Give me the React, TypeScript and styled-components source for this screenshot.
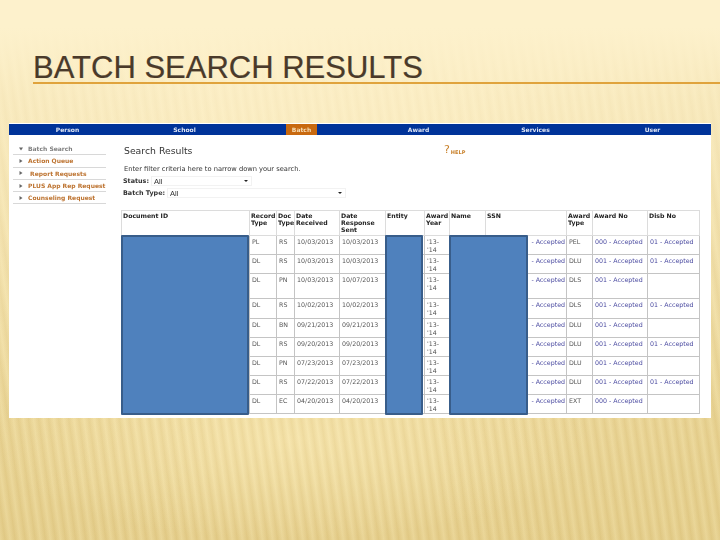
import styled, { createGlobalStyle } from "styled-components";

const GlobalStyle = createGlobalStyle`
  html, body {
    margin: 0;
    padding: 0;
  }
`;

const navItems = [
  { label: "Person" },
  { label: "School" },
  { label: "Batch", active: true },
  { label: "Award" },
  { label: "Services" },
  { label: "User" },
];

const sideItems = [
  { label: "Batch Search", muted: true, open: true },
  { label: "Action Queue" },
  { label: " Report Requests" },
  { label: "PLUS App Rep Request" },
  { label: "Counseling Request" },
];

const columns = [
  { label: "Document ID", width: 128 },
  { label: "Record Type", width: 27 },
  { label: "Doc Type", width: 18 },
  { label: "Date Received", width: 45 },
  { label: "Date Response Sent", width: 46 },
  { label: "Entity", width: 39 },
  { label: "Award Year", width: 25 },
  { label: "Name", width: 36 },
  { label: "SSN", width: 81 },
  { label: "Award Type", width: 26 },
  { label: "Award No", width: 55 },
  { label: "Disb No", width: 52 },
];

const rows = [
  { h: 19, rec: "PL", doc: "RS", got: "10/03/2013", sent: "10/03/2013", type: "PEL", no: "000", disb: true },
  { h: 19, rec: "DL", doc: "RS", got: "10/03/2013", sent: "10/03/2013", type: "DLU", no: "001", disb: true },
  { h: 25, rec: "DL", doc: "PN", got: "10/03/2013", sent: "10/07/2013", type: "DLS", no: "001", disb: false },
  { h: 20, rec: "DL", doc: "RS", got: "10/02/2013", sent: "10/02/2013", type: "DLS", no: "001", disb: true },
  { h: 19, rec: "DL", doc: "BN", got: "09/21/2013", sent: "09/21/2013", type: "DLU", no: "001", disb: false },
  { h: 19, rec: "DL", doc: "RS", got: "09/20/2013", sent: "09/20/2013", type: "DLU", no: "001", disb: true },
  { h: 19, rec: "DL", doc: "PN", got: "07/23/2013", sent: "07/23/2013", type: "DLU", no: "001", disb: false },
  { h: 19, rec: "DL", doc: "RS", got: "07/22/2013", sent: "07/22/2013", type: "DLU", no: "001", disb: true },
  { h: 19, rec: "DL", doc: "EC", got: "04/20/2013", sent: "04/20/2013", type: "EXT", no: "000", disb: false },
];

export default function App() {
  return (
    <>
      <GlobalStyle />
      <Slide>
        <Title>BATCH SEARCH RESULTS</Title>
        <Shot>
          <Nav>
            {navItems.map((item) => (
              <NavCell key={item.label}>
                <NavLabel $active={item.active}>{item.label}</NavLabel>
              </NavCell>
            ))}
          </Nav>
          <Body>
            <Side>
              {sideItems.map((item) => (
                <SideRow key={item.label} $muted={item.muted}>
                  <Arrow viewBox="0 0 4 4">
                    <path d={item.open ? "M0 .5H4L2 3.5Z" : "M.5 0V4L3.5 2Z"} />
                  </Arrow>
                  {item.label}
                </SideRow>
              ))}
            </Side>
            <Main>
              <TopLine>
                <Heading>Search Results</Heading>
                <Help>
                  <HelpMark>?</HelpMark>HELP
                </Help>
              </TopLine>
              <Hint>Enter filter criteria here to narrow down your search.</Hint>
              <Filter>
                <b>Status:</b>
                <Select $w={101}>All</Select>
              </Filter>
              <Filter>
                <b>Batch Type:</b>
                <Select $w={179}>All</Select>
              </Filter>
              <TableWrap>
                <Table>
                  <colgroup>
                    {columns.map((c) => (
                      <col key={c.label} width={c.width} />
                    ))}
                  </colgroup>
                  <thead>
                    <tr>
                      {columns.map((c) => (
                        <Th key={c.label}>{c.label}</Th>
                      ))}
                    </tr>
                  </thead>
                  <tbody>
                    {rows.map((r, i) => (
                      <tr key={i} style={{ height: r.h }}>
                        <Td />
                        <Td>{r.rec}</Td>
                        <Td>{r.doc}</Td>
                        <Td>{r.got}</Td>
                        <Td>{r.sent}</Td>
                        <Td />
                        <Td>
                          '13-
                          <br />
                          '14
                        </Td>
                        <Td />
                        <Ssn>- Accepted</Ssn>
                        <Td>{r.type}</Td>
                        <Link>{r.no} - Accepted</Link>
                        <Link>{r.disb ? "01 - Accepted" : ""}</Link>
                      </tr>
                    ))}
                  </tbody>
                </Table>
                <Redact $left={0} $w={128} />
                <Redact $left={264} $w={38} />
                <Redact $left={328} $w={79} />
              </TableWrap>
            </Main>
          </Body>
        </Shot>
      </Slide>
    </>
  );
}

const Slide = styled.div`
  position: relative;
  width: 720px;
  height: 540px;
  overflow: hidden;
  box-sizing: border-box;
  padding-top: 52px;
  background:
    linear-gradient(180deg, #fdf1cc 0%, #fdf1cc 5%, rgba(253, 241, 204, 0.65) 18%, rgba(253, 241, 204, 0.25) 50%, rgba(253, 241, 204, 0) 78%),
    repeating-linear-gradient(82deg, rgba(255, 244, 200, 0.22) 0, rgba(205, 172, 96, 0.14) 5px, rgba(255, 244, 200, 0.22) 10px),
    radial-gradient(ellipse 300px 100px at 290px 440px, rgba(250, 234, 180, 0.65), rgba(250, 234, 180, 0)),
    linear-gradient(90deg, rgba(226, 204, 136, 0.35), rgba(226, 204, 136, 0) 30%, rgba(226, 204, 136, 0) 60%, rgba(226, 204, 136, 0.5)),
    linear-gradient(180deg, #fbecc0 0%, #f2dfa6 60%, #e4cd8a 100%);
`;

const Title = styled.h1`
  margin: 0 0 0 33px;
  padding: 0;
  height: 30px;
  border-bottom: 2px solid #e0a33c;
  font: 400 31px/32px "Liberation Sans", Arial, sans-serif;
  -webkit-text-stroke: 0.2px #4a3a2a;
  color: #4a3a2a;
  white-space: nowrap;
`;

const Shot = styled.div`
  width: 702px;
  height: 295px;
  margin: 39px 0 0 9px;
  background: #fff;
  font-family: "DejaVu Sans", Verdana, sans-serif;
  font-size: 6px;
  color: #333;
  filter: blur(0.4px);
  overflow: hidden;
`;

const Nav = styled.div`
  display: grid;
  grid-template-columns: repeat(6, 1fr);
  height: 11px;
  margin-top: 1px;
  background: #003399;
`;

const NavCell = styled.div`
  display: flex;
  justify-content: center;
`;

const NavLabel = styled.span<{ $active?: boolean }>`
  width: ${(p) => (p.$active ? "31px" : "auto")};
  text-align: center;
  font-weight: 700;
  line-height: 11px;
  font-size: 6px;
  white-space: nowrap;
  color: ${(p) => (p.$active ? "#f6dcb4" : "#dfe6f5")};
  background: ${(p) => (p.$active ? "#c8690f" : "transparent")};
`;

const Body = styled.div`
  display: flex;
`;

const Side = styled.div`
  width: 93px;
  margin: 8px 14px 0 4px;
  flex: none;
`;

const SideRow = styled.div<{ $muted?: boolean }>`
  display: flex;
  align-items: center;
  gap: 5px;
  height: 12.3px;
  padding-left: 6px;
  box-sizing: border-box;
  border-bottom: 1px solid #d8d8d8;
  font-weight: 700;
  font-size: 6px;
  white-space: pre;
  color: ${(p) => (p.$muted ? "#808080" : "#bd7330")};
`;

const Arrow = styled.svg`
  width: 4px;
  height: 4px;
  flex: none;
  fill: #666;
`;

const Main = styled.div`
  flex: 1;
  padding: 8px 0 0 2px;
  position: relative;
`;

const TopLine = styled.div`
  display: flex;
  align-items: center;
  height: 14px;
`;

const Heading = styled.div`
  width: 320px;
  padding-left: 2px;
  font-size: 9.3px;
  color: #333;
`;

const Help = styled.div`
  display: flex;
  align-items: flex-end;
  font-size: 5px;
  font-weight: 700;
  color: #c8802a;
`;

const HelpMark = styled.span`
  font-size: 11px;
  font-weight: 400;
  line-height: 10px;
  margin-right: 1px;
`;

const Hint = styled.div`
  margin: 7px 0 0 2px;
  height: 10px;
  line-height: 10px;
  font-size: 6.7px;
  white-space: nowrap;
`;

const Filter = styled.div`
  display: flex;
  align-items: center;
  gap: 2px;
  height: 11px;
  margin: 1px 0 0 1px;
  font-size: 6.4px;
`;

const Select = styled.div<{ $w: number }>`
  position: relative;
  width: ${(p) => p.$w}px;
  height: 10px;
  line-height: 9px;
  padding-left: 2px;
  box-sizing: border-box;
  border: 1px solid #f2f2f2;
  font-family: "Liberation Sans", Arial, sans-serif;
  font-size: 7.5px;
  &::after {
    content: "";
    position: absolute;
    right: 3px;
    top: 3px;
    border: 2px solid transparent;
    border-top: 2.5px solid #222;
    border-bottom: 0;
  }
`;

const TableWrap = styled.div`
  position: relative;
  margin: 12px 0 0 -1px;
  width: 578px;
`;

const Table = styled.table`
  border-collapse: collapse;
  table-layout: fixed;
  width: 578px;
`;

const Th = styled.th`
  height: 25px;
  padding: 1px 1px;
  box-sizing: border-box;
  border: 1px solid #dcdcdc;
  text-align: left;
  vertical-align: top;
  font-size: 6.2px;
  line-height: 7px;
  font-weight: 700;
  color: #222;
  overflow: hidden;
`;

const Td = styled.td`
  padding: 2px 1px 0 2px;
  border: 1px solid #c4c4c4;
  vertical-align: top;
  font-size: 6.3px;
  line-height: 7.5px;
  color: #555;
  white-space: nowrap;
  overflow: hidden;
`;

const Link = styled(Td)`
  color: #4a4aa0;
`;

const Ssn = styled(Link)`
  text-align: right;
`;

const Redact = styled.div<{ $left: number; $w: number }>`
  position: absolute;
  top: 25px;
  bottom: -1px;
  left: ${(p) => p.$left}px;
  width: ${(p) => p.$w}px;
  box-sizing: border-box;
  background: #4f81bd;
  border: 2px solid #385d8a;
  border-radius: 1px;
`;
